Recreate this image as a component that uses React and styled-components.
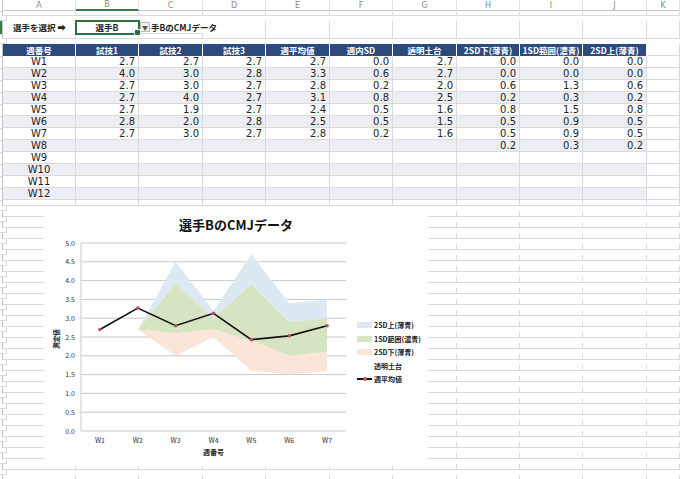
import React from "react";
import styled, { createGlobalStyle } from "styled-components";

const COLS = "3px 73px 63px 64px 63px 64px 63px 64px 63px 63px 64px 1fr";
const LETTERS = ["A", "B", "C", "D", "E", "F", "G", "H", "I", "J", "K"];
const HEADS = ["週番号", "試技1", "試技2", "試技3", "週平均値", "週内SD", "透明土台", "2SD下(薄青)", "1SD範囲(濃青)", "2SD上(薄青)"];

const DATA = [
  ["W1", "2.7", "2.7", "2.7", "2.7", "0.0", "2.7", "0.0", "0.0", "0.0"],
  ["W2", "4.0", "3.0", "2.8", "3.3", "0.6", "2.7", "0.0", "0.0", "0.0"],
  ["W3", "2.7", "3.0", "2.7", "2.8", "0.2", "2.0", "0.6", "1.3", "0.6"],
  ["W4", "2.7", "4.0", "2.7", "3.1", "0.8", "2.5", "0.2", "0.3", "0.2"],
  ["W5", "2.7", "1.9", "2.7", "2.4", "0.5", "1.6", "0.8", "1.5", "0.8"],
  ["W6", "2.8", "2.0", "2.8", "2.5", "0.5", "1.5", "0.5", "0.9", "0.5"],
  ["W7", "2.7", "3.0", "2.7", "2.8", "0.2", "1.6", "0.5", "0.9", "0.5"],
  ["W8", "", "", "", "", "", "", "0.2", "0.3", "0.2"],
  ["W9", "", "", "", "", "", "", "", "", ""],
  ["W10", "", "", "", "", "", "", "", "", ""],
  ["W11", "", "", "", "", "", "", "", "", ""],
  ["W12", "", "", "", "", "", "", "", "", ""],
];

const GlobalStyle = createGlobalStyle`
  body {
    margin: 0;
    background: #fff;
    font-family: "DejaVu Sans", "Noto Sans CJK JP", sans-serif;
    overflow: hidden;
  }
`;

const Sheet = styled.div`
  position: relative;
  width: 680px;
  height: 479px;
  overflow: hidden;
`;

const Row = styled.div`
  display: grid;
  grid-template-columns: ${COLS};
  height: ${({ $h }) => $h}px;
`;

const Gutter = styled.div`
  border-right: 1px solid #c4c4c4;
  background: ${({ $active }) => ($active ? "#3c7a4b" : "transparent")};
`;

const Cell = styled.div`
  box-sizing: border-box;
  display: flex;
  align-items: center;
  justify-content: ${({ $align }) => $align || "flex-end"};
  padding: 0 3px;
  border-right: 1px solid #dadada;
  border-bottom: 1px solid #dadada;
  background: ${({ $stripe }) => ($stripe ? "#eceef4" : "#fff")};
  color: #222;
  font-size: 10px;
  white-space: nowrap;
`;

const Letter = styled(Cell)`
  justify-content: center;
  color: #8a8a8a;
  font-size: 8px;
  border-right-color: #e4e4e4;
  border-bottom: ${({ $sel }) => ($sel ? "2px solid #3c7a4b" : "1px solid #c9c9c9")};
`;

const Label = styled(Cell)`
  justify-content: flex-start;
  padding-left: 10px;
  font-family: "Noto Sans CJK JP", sans-serif;
  font-weight: 700;
  font-size: 8.5px;
`;

const Picked = styled(Cell)`
  position: relative;
  justify-content: center;
  font-family: "Noto Sans CJK JP", sans-serif;
  font-weight: 700;
  font-size: 8.5px;
  outline: 2px solid #2f6f42;
  outline-offset: -1px;
  z-index: 2;
`;

const Handle = styled.span`
  position: absolute;
  right: -3px;
  bottom: -3px;
  width: 5px;
  height: 5px;
  background: #2f6f42;
  border: 1px solid #fff;
`;

const Overflow = styled(Cell)`
  position: relative;
  z-index: 1;
  overflow: visible;
  justify-content: flex-start;
  padding: 0 0 0 1px;
  gap: 1px;
  font-family: "Noto Sans CJK JP", sans-serif;
  font-weight: 700;
  font-size: 8.5px;
  border-right: none;
  background: transparent;
`;

const DropBtn = styled.span`
  box-sizing: border-box;
  flex: none;
  width: 10px;
  height: 10px;
  display: flex;
  align-items: center;
  justify-content: center;
  background: #f0f0f0;
  border: 1px solid #b8b8b8;
  color: #555;
  font-size: 6px;
`;

const HeadCell = styled(Cell)`
  justify-content: center;
  background: #2c4a7c;
  color: #fff;
  font-family: "Noto Sans CJK JP", sans-serif;
  font-weight: 700;
  font-size: 8.5px;
  border-right: 1px solid #fff;
  border-bottom: none;
`;

const ChartBox = styled.div`
  position: absolute;
  left: 44px;
  top: 208px;
  width: 384px;
  height: 258px;
  background: #fff;
  display: flex;
  flex-direction: column;
  font-family: "Noto Sans CJK JP", sans-serif;
`;

const ChartTitle = styled.div`
  height: 30px;
  padding-top: 3px;
  box-sizing: border-box;
  line-height: 28px;
  text-align: center;
  font-size: 13px;
  font-weight: 700;
  color: #111;
`;

const ChartBody = styled.div`
  display: flex;
  align-items: center;
  flex: 1;
`;

const Legend = styled.ul`
  list-style: none;
  margin: 0;
  padding: 0 0 0 3px;
  display: flex;
  flex-direction: column;
  gap: 4px;
`;

const LegendItem = styled.li`
  display: flex;
  align-items: center;
  gap: 2px;
  height: 9.5px;
  font-size: 7px;
  font-weight: 700;
  color: #222;
`;

const Swatch = styled.span`
  width: 15px;
  height: 6px;
  background: ${({ $c }) => $c};
`;

const LineSwatch = styled.span`
  position: relative;
  width: 15px;
  height: 2px;
  background: #111;

  &::after {
    content: "";
    position: absolute;
    left: 6px;
    top: -1px;
    width: 4px;
    height: 4px;
    border-radius: 50%;
    background: #c0505a;
  }
`;

const TOP = 5;
const BOTTOM = 193;
const LEFT = 37;
const RIGHT = 302;
const yOf = (v) => BOTTOM - (v * (BOTTOM - TOP)) / 5;
const xOf = (i) => LEFT + ((RIGHT - LEFT) / 7) * (i + 0.5);

const base = [2.7, 2.7, 2.0, 2.5, 1.6, 1.5, 1.6];
const low = [0, 0, 0.6, 0.2, 0.8, 0.5, 0.5];
const mid = [0, 0, 1.3, 0.3, 1.5, 0.9, 0.9];
const high = [0, 0, 0.6, 0.2, 0.8, 0.5, 0.5];
const mean = [2.7, 3.27, 2.8, 3.13, 2.43, 2.53, 2.8];

const c0 = base;
const c1 = c0.map((v, i) => v + low[i]);
const c2 = c1.map((v, i) => v + mid[i]);
const c3 = c2.map((v, i) => v + high[i]);

const band = (lo, hi) => {
  const top = hi.map((v, i) => `${xOf(i)},${yOf(v)}`);
  const bot = lo.map((v, i) => `${xOf(i)},${yOf(v)}`).reverse();
  return [...top, ...bot].join(" ");
};

function Plot() {
  const ticks = [];
  for (let v = 0; v <= 5.001; v += 0.5) ticks.push(Math.round(v * 10) / 10);
  return (
    <svg width="310" height="228" style={{ flex: "none" }}>
      {ticks.map((v) => (
        <g key={v}>
          <line x1={LEFT} x2={RIGHT} y1={yOf(v)} y2={yOf(v)} stroke="#c8c8c8" strokeWidth="1" />
          <text x={LEFT - 6} y={yOf(v) + 2.5} fontSize="7" textAnchor="end" fill="#333">
            {v.toFixed(1)}
          </text>
        </g>
      ))}
      <line x1={LEFT} x2={LEFT} y1={TOP} y2={BOTTOM} stroke="#c8c8c8" />
      <polygon points={band(c2, c3)} fill="#dde9f2" />
      <polygon points={band(c1, c2)} fill="#d7e4c2" />
      <polygon points={band(c0, c1)} fill="#fbe5d8" />
      <polyline
        points={mean.map((v, i) => `${xOf(i)},${yOf(v)}`).join(" ")}
        fill="none"
        stroke="#111"
        strokeWidth="1.6"
      />
      {mean.map((v, i) => (
        <circle key={i} cx={xOf(i)} cy={yOf(v)} r="1.8" fill="#c0505a" />
      ))}
      {mean.map((_, i) => (
        <text key={i} x={xOf(i)} y={205} fontSize="7" textAnchor="middle" fill="#333">
          W{i + 1}
        </text>
      ))}
      <text x={(LEFT + RIGHT) / 2} y={217} fontSize="7" fontWeight="700" textAnchor="middle" fill="#222">
        週番号
      </text>
      <text
        x={0}
        y={0}
        fontSize="6.5"
        fontWeight="700"
        textAnchor="middle"
        fill="#222"
        transform="translate(15 101) rotate(-90)"
      >
        測定値
      </text>
    </svg>
  );
}

function Chart() {
  return (
    <ChartBox>
      <ChartTitle>選手BのCMJデータ</ChartTitle>
      <ChartBody>
        <Plot />
        <Legend>
          <LegendItem><Swatch $c="#dde9f2" />2SD上(薄青)</LegendItem>
          <LegendItem><Swatch $c="#d7e4c2" />1SD範囲(濃青)</LegendItem>
          <LegendItem><Swatch $c="#fbe5d8" />2SD下(薄青)</LegendItem>
          <LegendItem><Swatch $c="transparent" />透明土台</LegendItem>
          <LegendItem><LineSwatch />週平均値</LegendItem>
        </Legend>
      </ChartBody>
    </ChartBox>
  );
}

function EmptyRow({ h }) {
  return (
    <Row $h={h}>
      <Gutter />
      {LETTERS.map((l) => <Cell key={l} />)}
      <Cell />
    </Row>
  );
}

export default function App() {
  return (
    <Sheet>
      <GlobalStyle />
      <Row $h={11}>
        <Gutter />
        {LETTERS.map((l) => (
          <Letter key={l} $sel={l === "B"}>{l}</Letter>
        ))}
        <Letter />
      </Row>
      <EmptyRow h={10} />
      <Row $h={12}>
        <Gutter $active />
        <Label>選手を選択 ➡</Label>
        <Picked>
          選手B
          <Handle />
        </Picked>
        <Overflow>
          <DropBtn>▼</DropBtn>
          手BのCMJデータ
        </Overflow>
        {LETTERS.slice(3).map((l) => <Cell key={l} />)}
        <Cell />
      </Row>
      <EmptyRow h={11} />
      <Row $h={12}>
        <Gutter />
        {HEADS.map((h) => <HeadCell key={h}>{h}</HeadCell>)}
        <Cell />
        <Cell />
      </Row>
      {DATA.map((r, i) => (
        <Row key={r[0]} $h={12}>
          <Gutter />
          {r.map((v, j) => (
            <Cell key={j} $stripe={i % 2 === 1} $align={j === 0 ? "center" : "flex-end"}>
              {v}
            </Cell>
          ))}
          <Cell />
          <Cell />
        </Row>
      ))}
      {Array.from({ length: 26 }, (_, i) => <EmptyRow key={i} h={11} />)}
      <Chart />
    </Sheet>
  );
}
